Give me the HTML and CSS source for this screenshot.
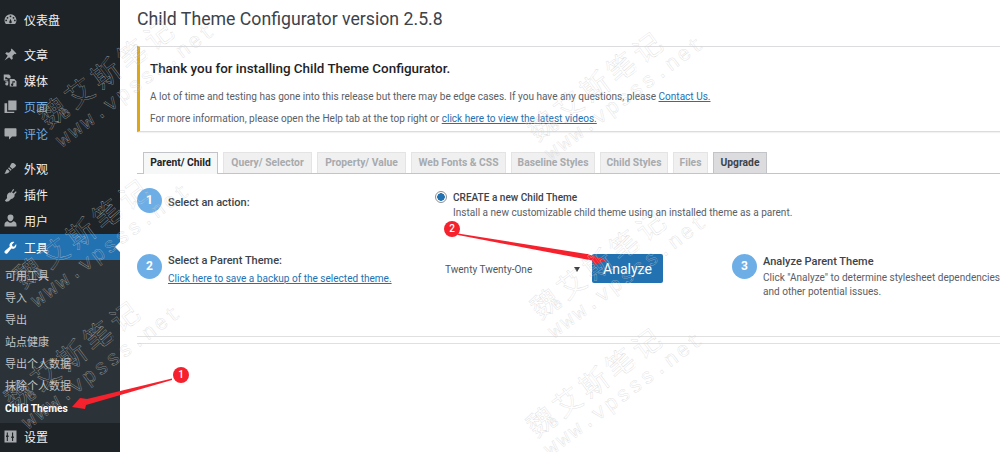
FILE: index.html
```html
<!DOCTYPE html>
<html>
<head>
<meta charset="UTF-8">
<title>Child Theme Configurator</title>
<link rel="stylesheet" href="styles.css">
</head>
<body>

<aside class="sidebar">
<ul class="menu">
<li class="item sep"><svg class="ico" viewBox="0 0 20 20"><path d="M10 3a8 8 0 0 0-8 8c0 2 .7 3.700 1.900 5h12.200A8 8 0 0 0 10 3zM6 6.500a1.200 1.200 0 1 1 0 2.400 1.200 1.200 0 0 1 0-2.400zM4.200 10a1.200 1.200 0 1 1 0 2.400 1.200 1.200 0 0 1 0-2.400zM10 4.500a1.200 1.200 0 1 1 0 2.400 1.200 1.200 0 0 1 0-2.400zM14 6.500a1.200 1.200 0 1 1 0 2.400 1.200 1.200 0 0 1 0-2.400zM15.800 10a1.200 1.200 0 1 1 0 2.400 1.200 1.200 0 0 1 0-2.400zM10 9l1.500 3.500a1.700 1.700 0 1 1-3 0z" fill-rule="evenodd"/></svg>仪表盘</li>
<li class="item"><svg class="ico" viewBox="0 0 20 20"><path d="M11.500 2l6.500 6.500-1.500 1-1-.5-3 3 .5 3.500-1.500 1.500-3.300-3.300L2 18l4.300-6.300L3 8.500 4.500 7l3.500.5 3-3-.5-1z"/></svg>文章</li>
<li class="item"><svg class="ico" viewBox="0 0 20 20"><path d="M1 2h7l2 2v3H6.500L5 5.500H3v2.800h3V10H1zM9 8h6l3 3v7H9zm3.500 3v3.200a1.500 1.500 0 1 0 1.200 1.400V12.500H16V11zM3 11h4v3.500a2 2 0 1 1-1.500-1.900V12H3z" fill-rule="evenodd"/></svg>媒体</li>
<li class="item"><svg class="ico" viewBox="0 0 20 20"><path d="M7 2h11v13H7zM2 5.500h3.500V17H15v1.500H2z"/></svg><span class="blue">页面</span></li>
<li class="item sep"><svg class="ico" viewBox="0 0 20 20"><path d="M3 3h14a1 1 0 0 1 1 1v9a1 1 0 0 1-1 1h-5l-4 4v-4H3a1 1 0 0 1-1-1V4a1 1 0 0 1 1-1z"/></svg><span class="blue">评论</span></li>
<li class="item"><svg class="ico" viewBox="0 0 20 20"><path d="M12.500 2.500c2 0 3 .6 5 3-.5 1.500-2.500 3.500-5 5L9 7.300c1-2 2-4.800 3.500-4.800zM8 8.300l3.500 3.400-1.500 1.300-3.300-3.300zM6 11l2.800 2.800c-.5 2.200-4 3.700-7 3.200 2-1.200 1.500-5.200 4.200-6z"/></svg>外观</li>
<li class="item"><svg class="ico" viewBox="0 0 20 20"><path d="M13.500 2.500l1.500 1.200-3 3.300 2 1.800 3-3.200 1.200 1.200-3 3.400c1 2-1 5-4.500 5.800l-3 3-3.500.5-1.700-1.500 3-3.500C4.500 11 6 8.500 8 7.500c.8-.4 1.700-.3 2.500.2z"/></svg>插件</li>
<li class="item"><svg class="ico" viewBox="0 0 20 20"><path d="M10 2a4 4 0 0 1 4 4c0 2.300-1.800 5-4 5S6 8.300 6 6a4 4 0 0 1 4-4zM6.500 11c1 1.300 2.200 2 3.500 2s2.500-.7 3.500-2c2.500.3 4.500 2 4.500 4.500V18H2v-2.500C2 13 4 11.300 6.500 11z"/></svg>用户</li>
<li class="item active"><svg class="ico" viewBox="0 0 20 20"><path d="M17.500 5.200c.6 2 .1 4-1.500 5.300-1.400 1.200-3.300 1.400-4.800.8L6 17.500c-.9 1-2.400 1-3.300.1-1-.9-.9-2.400 0-3.300L9 9c-.7-1.600-.4-3.500.9-4.900 1.400-1.500 3.400-2 5.200-1.300L12 6l.5 2.300 2.300.6z"/></svg>工具</li>
</ul>
<ul class="submenu">
<li>可用工具</li>
<li>导入</li>
<li>导出</li>
<li>站点健康</li>
<li>导出个人数据</li>
<li>抹除个人数据</li>
<li class="current">Child Themes</li>
</ul>
<ul class="menu">
<li class="item"><svg class="ico" viewBox="0 0 20 20"><path d="M2 2h16v16H2zm3 2.500v4H4v2h1V16h1.500v-5.500h1v-2h-1v-4zm7 0V10h-1v2h1v4h1.500v-4h1v-2h-1V4.500z" fill-rule="evenodd"/></svg>设置</li>
</ul>
</aside>

<main class="main">
<h1>Child Theme Configurator version 2.5.8</h1>

<div class="notice">
<h4>Thank you for installing Child Theme Configurator.</h4>
<p>A lot of time and testing has gone into this release but there may be edge cases. If you have any questions, please <a href="#">Contact Us.</a></p>
<p>For more information, please open the Help tab at the top right or <a href="#">click here to view the latest videos.</a></p>
</div>

<div class="tabs">
<span class="tab on">Parent/ Child</span>
<span class="tab">Query/ Selector</span>
<span class="tab">Property/ Value</span>
<span class="tab">Web Fonts &amp; CSS</span>
<span class="tab">Baseline Styles</span>
<span class="tab">Child Styles</span>
<span class="tab">Files</span>
<span class="tab up">Upgrade</span>
</div>

<div class="row row-one">
<div class="step"><span class="num">1</span><strong class="label">Select an action:</strong></div>
<div class="choice">
<span class="radio"></span>
<div>
<strong class="title">CREATE a new Child Theme</strong>
<p>Install a new customizable child theme using an installed theme as a parent.</p>
</div>
</div>
</div>

<div class="row row-two">
<div class="step"><span class="num">2</span><div><strong class="label">Select a Parent Theme:</strong><a class="backup" href="#">Click here to save a backup of the selected theme.</a></div></div>
<div class="pick">
<span class="select">Twenty Twenty-One<i class="caret"></i></span>
<button class="analyze">Analyze</button>
</div>
<div class="step"><span class="num">3</span><div class="about"><strong class="title">Analyze Parent Theme</strong><p>Click "Analyze" to determine stylesheet dependencies<br>and other potential issues.</p></div></div>
</div>

<hr class="rule first">
<hr class="rule">
</main>

<svg class="arrows" viewBox="0 0 1000 452">
<polygon points="172,378.500 87,399 80,398 72,407 85,409 86,405 172,380" fill="#f5222d"/>
<polygon points="458,233.500 590,254.500 587,254 607,260 595,265 592,260.500 458,235" fill="#f5222d"/>
</svg>
<span class="badge b1">1</span>
<span class="badge b2">2</span>

<div class="wm w1"><b>魏艾斯笔记</b><span>www.vpsss.net</span></div>
<div class="wm w2"><b>魏艾斯笔记</b><span>www.vpsss.net</span></div>
<div class="wm w3"><b>魏艾斯笔记</b><span>www.vpsss.net</span></div>
<div class="wm w4"><b>魏艾斯笔记</b><span>www.vpsss.net</span></div>
<div class="wm w5"><b>魏艾斯笔记</b><span>www.vpsss.net</span></div>
<div class="wm w6"><b>魏艾斯笔记</b><span>www.vpsss.net</span></div>

</body>
</html>
```

FILE: styles.css
```css
*{
box-sizing: border-box;
margin:0; padding:0;
}

body{
display: flex;
width: 1000px;
height: 452px;
overflow: hidden;
position: relative;
background: #fff;
font: 10.050px Roboto,"Noto Sans CJK SC",sans-serif;
color: #5a6066;
}

a{
color: #2271b1;
}

ul{
list-style: none;
}

/* sidebar */
.sidebar{
width: 120px;
flex: none;
padding-top: 6px;
background: #1d2327;
color: #f0f0f1;
font-size: 12px;
}

.item{
display: flex;
align-items: center;
gap: 6px;
height: 26.250px;
padding-left: 3px;
}

.sep{
margin-bottom: 9px;
}

.ico{
width: 15px;
height: 15px;
fill: #a7aaad;
flex: none;
}

.blue{
color: #72aee6;
}

.active{
position: relative;
background: #2271b1;
color: #fff;
}

.active .ico{
fill: #fff;
}

.active:after{
content: "";
position: absolute;
right: 0;
top: 8px;
border: 5px solid transparent;
border-left: 0;
border-right-color: #fff;
}

.submenu{
height: 163px;
padding-top: 6px;
background: #2c3338;
color: #c3c4c7;
font-size: 11px;
}

.submenu li{
height: 21.900px;
line-height: 21.900px;
padding-left: 5px;
}

.submenu .current{
color: #fff;
font-weight: 700;
font-size: 10.200px;
}

/* main */
.main{
flex: 1;
min-width: 0;
padding-left: 17px;
}

h1{
height: 46px;
padding-top: 5px;
font-size: 17.700px;
font-weight: 400;
line-height: 28px;
color: #3c434a;
white-space: nowrap;
}

.notice{
height: 86px;
margin-right: -5px;
padding: 12px 0 0 10px;
border: 1px solid #dcdcde;
border-left: 3px solid #dba617;
box-shadow: 0 1px 1px rgba(0,0,0,.05);
}

.notice h4{
font-size: 13.400px;
font-weight: 500;
line-height: 20px;
color: #1d2327;
margin-bottom: 10px;
}

.notice p{
line-height: 16px;
margin-bottom: 6px;
white-space: nowrap;
}

.tabs{
display: grid;
grid-template-columns: 75px 89px 89px 95px 84px 68px 35px 54px;
gap: 5px;
height: 22px;
margin-top: 20px;
padding-left: 6px;
border-bottom: 1px solid #c3c4c7;
}

.tab{
height: 21px;
line-height: 20px;
text-align: center;
background: #f0f0f1;
border: 1px solid #e4e4e4;
border-bottom: 0;
color: #a7aaad;
font-size: 10.300px;
font-weight: 700;
white-space: nowrap;
}

.tab.on{
height: 22px;
background: #f6f7f7;
border-color: #c3c4c7;
color: #1d2327;
}

.tab.up{
background: #dcdcde;
border-color: #c3c4c7;
color: #3c434a;
}

.row{
display: grid;
grid-template-columns: 298px 297px 1fr;
}

.row-one{
margin-top: 14px;
height: 66px;
}

.step{
display: flex;
gap: 6px;
}

.num{
width: 25px;
height: 25px;
flex: none;
border-radius: 50%;
background: #6eaee6;
color: #fff;
font-size: 12px;
font-weight: 700;
line-height: 25px;
text-align: center;
}

.label{
display: block;
font-size: 11px;
font-weight: 500;
line-height: 14px;
color: #3c434a;
}

.row-one .label{
line-height: 29px;
}

.backup{
display: block;
margin-top: 5px;
white-space: nowrap;
}

.choice{
display: flex;
gap: 6px;
padding-top: 1px;
white-space: nowrap;
}

.choice p{
margin-top: 1px;
}

.radio{
width: 12px;
height: 12px;
margin-top: 2px;
flex: none;
border: 1px solid #8c8f94;
border-radius: 50%;
background: radial-gradient(circle,#2271b1 0 3.500px,#fff 4px);
}

.title{
display: block;
font-weight: 500;
line-height: 17px;
color: #3c434a;
}

.pick{
display: flex;
align-items: center;
height: 29px;
}

.select{
display: flex;
align-items: center;
justify-content: space-between;
width: 157px;
padding: 2px 12px 0 10px;
color: #50575e;
}

.caret{
border: 3.500px solid transparent;
border-bottom: 0;
border-top: 5px solid #3c434a;
}

.analyze{
width: 71px;
height: 29px;
padding-top: 1px;
border: 0;
border-radius: 2px;
background: #2271b1;
color: #fff;
font: 14px Roboto,sans-serif;
}

.about{
margin-top: -1px;
white-space: nowrap;
}

.about .title{
font-size: 11px;
}

.about p{
margin-top: 1px;
line-height: 14px;
}

.rule{
margin-top: 6px;
border: 0;
border-top: 1px solid #e0e0e0;
}

.rule.first{
margin-top: 37px;
}

/* callouts on top of the page */
.arrows{
position: absolute;
left: 0;
top: 0;
width: 1000px;
height: 452px;
}

.badge{
position: absolute;
width: 16px;
height: 16px;
border-radius: 50%;
background: #f5222d;
color: #fff;
font-size: 10px;
font-weight: 500;
line-height: 16px;
text-align: center;
}

.b1{
left: 173px;
top: 367px;
}

.b2{
left: 444px;
top: 221px;
}

/* watermark */
.wm{
position: absolute;
transform: rotate(-36.600deg);
transform-origin: 0 0;
color: transparent;
-webkit-text-stroke: .25px #cdcdcd;
white-space: nowrap;
pointer-events: none;
}

.wm b{
display: block;
font: 400 28px/34px "Noto Sans CJK SC",serif;
letter-spacing: 4.700px;
}

.wm span{
display: block;
margin-top: 3px;
font: 21px/20px "Liberation Mono",monospace;
letter-spacing: 2.300px;
}

.w1{left: 31px; top: 106px;}
.w2{left: 520px; top: 119px;}
.w3{left: 6px; top: 266px;}
.w4{left: 523px; top: 297px;}
.w5{left: -3px; top: 388px;}
.w6{left: 519px; top: 415px;}
```
